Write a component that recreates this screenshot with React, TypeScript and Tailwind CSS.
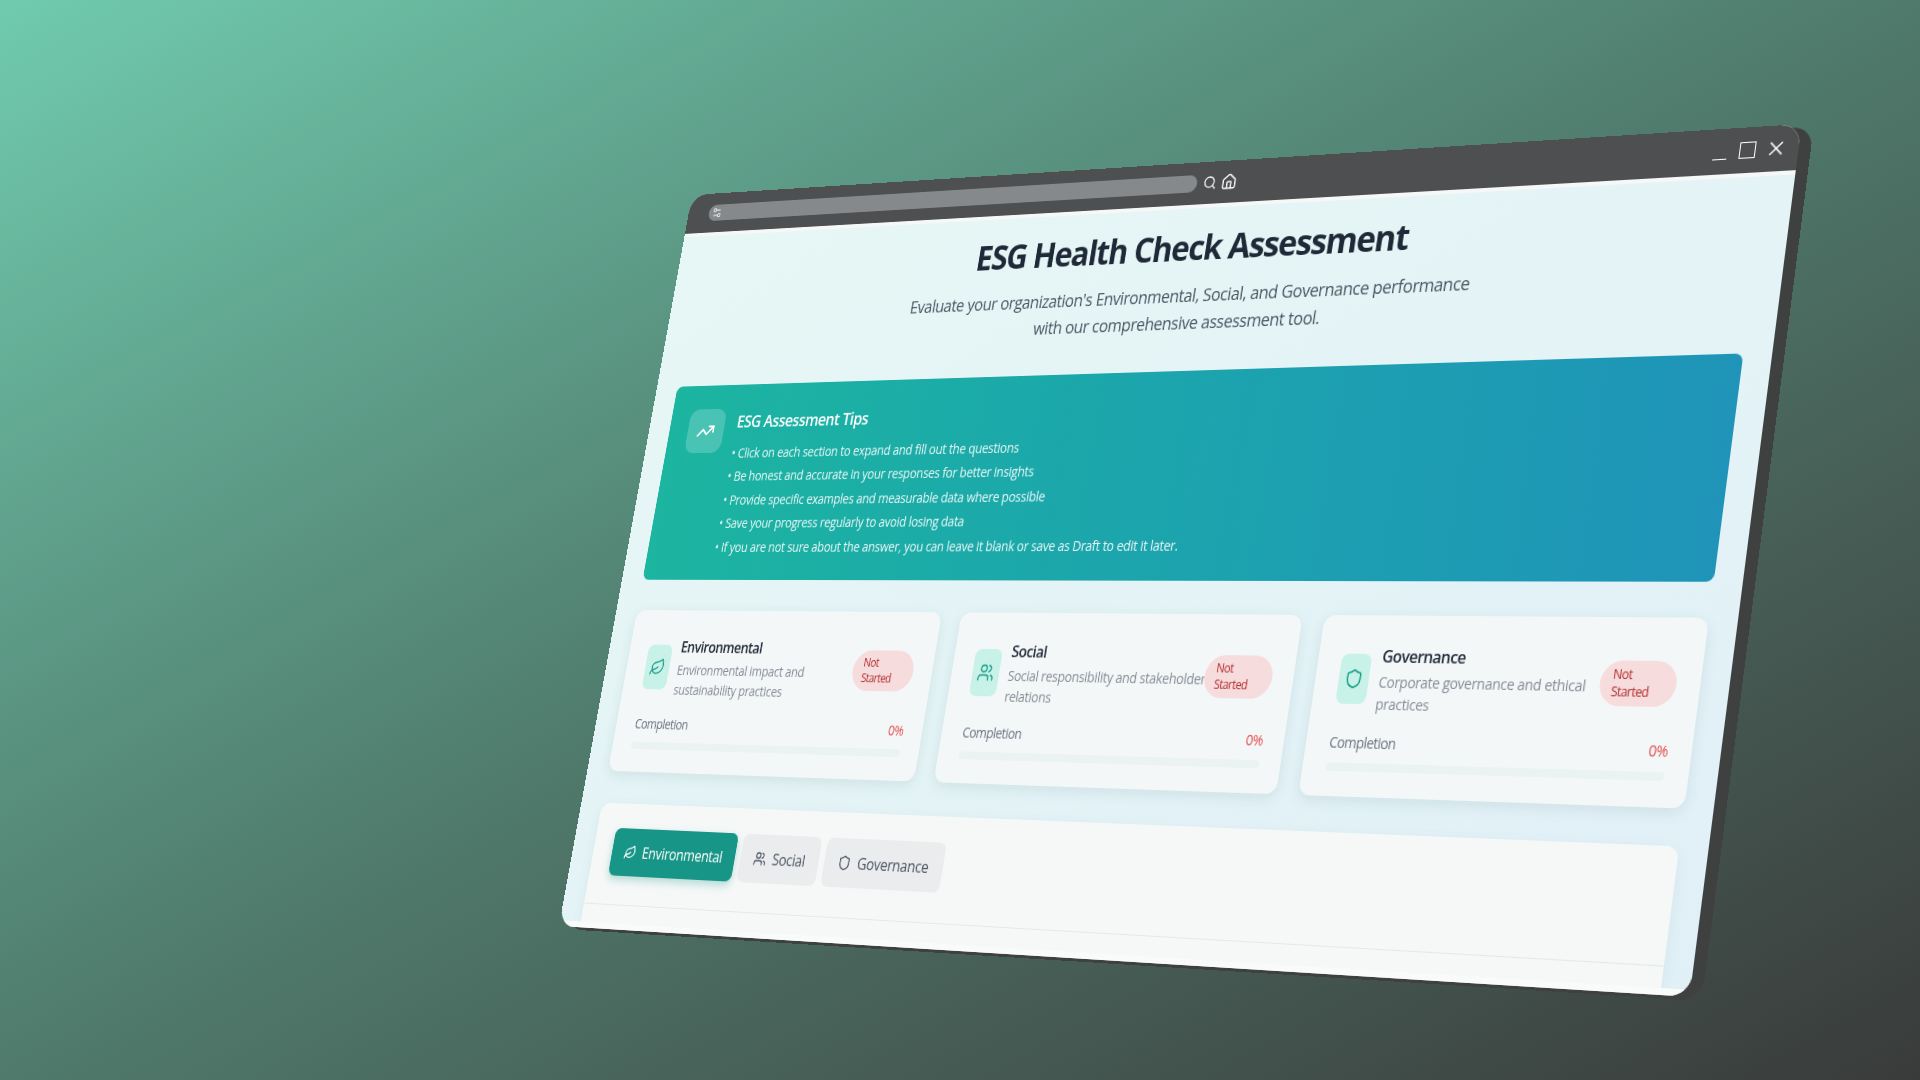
import { House, Leaf, Search, Settings2, Shield, TrendingUp, Users, X } from "lucide-react";

const W = 1280;
const H = 800;

// corners of the window face on screen: TL, TR, BR, BL
const QUAD = [
  [692, 195],
  [1802, 124],
  [1690, 997],
  [559, 926],
];

function quadMatrix() {
  const [[x0, y0], [x1, y1], [x2, y2], [x3, y3]] = QUAD;
  const dx1 = x1 - x2;
  const dy1 = y1 - y2;
  const dx2 = x3 - x2;
  const dy2 = y3 - y2;
  const sx = x0 - x1 + x2 - x3;
  const sy = y0 - y1 + y2 - y3;
  const det = dx1 * dy2 - dx2 * dy1;
  const g = (sx * dy2 - dx2 * sy) / det;
  const h = (dx1 * sy - sx * dy1) / det;
  const a = x1 - x0 + g * x1;
  const b = x3 - x0 + h * x3;
  const d = y1 - y0 + g * y1;
  const e = y3 - y0 + h * y3;
  return `matrix3d(${a / W},${d / W},0,${g / W},${b / H},${e / H},0,${h / H},0,0,1,0,${x0},${y0},0,1)`;
}

const tips = [
  "Click on each section to expand and fill out the questions",
  "Be honest and accurate in your responses for better insights",
  "Provide specific examples and measurable data where possible",
  "Save your progress regularly to avoid losing data",
  "If you are not sure about the answer, you can leave it blank or save as Draft to edit it later.",
];

const sections = [
  { name: "Environmental", icon: Leaf, lines: ["Environmental impact and", "sustainability practices"] },
  { name: "Social", icon: Users, lines: ["Social responsibility and stakeholder", "relations"] },
  { name: "Governance", icon: Shield, lines: ["Corporate governance and ethical", "practices"] },
];

const SectionCard = ({ name, icon: Icon, lines }: (typeof sections)[number]) => (
  <div className="rounded-xl bg-[#f4f7f8] pb-6 pl-[25px] pr-[23px] pt-[27px] shadow-[0_4px_14px_rgba(60,110,110,0.12)]">
    <div className="flex items-center gap-[11px]">
      <div className="flex h-12 w-8 shrink-0 items-center justify-center rounded-lg bg-[#c8f2e8]">
        <Icon size={20} strokeWidth={1.75} className="text-[#0f9a85]" />
      </div>
      <div className="min-w-0 flex-1 whitespace-nowrap">
        <div className="text-base font-semibold leading-6 text-[#1f2937]">{name}</div>
        <p className="mt-0.5 text-sm leading-[21px] tracking-[-0.02em] text-[#858b96]">
          {lines[0]}
          <br />
          {lines[1]}
        </p>
      </div>
      <div className="w-[75px] shrink-0 rounded-[21px] bg-[#f6dcdc] px-3 py-[5px] text-xs font-medium leading-4 text-[#b42a2f]">
        Not Started
      </div>
    </div>
    <div className="mt-[17px] flex items-center justify-between text-sm leading-5">
      <span className="text-[#6b7280]">Completion</span>
      <span className="font-medium text-[#e14a4a]">0%</span>
    </div>
    <div className="mt-[9px] h-2 rounded-full bg-[#eaf3f2]" />
  </div>
);

export default function App() {
  return (
    <div className="h-screen w-full overflow-hidden bg-linear-to-br from-[#70cbae] via-[#4f7a6c] to-[#393b3a] font-['Open_Sans',sans-serif] tracking-[-0.035em]">
      <div
        className="flex h-[800px] w-[1280px] origin-top-left flex-col overflow-hidden rounded-[20px] bg-[#f7f8f8] shadow-[12px_3px_0_#3f4140]"
        style={{ transform: quadMatrix() }}
      >
        <div className="flex h-11 shrink-0 items-center bg-[#4e4f51] pl-7 pr-[14px] text-white">
          <div className="flex h-[18px] w-[614px] items-center rounded-full bg-[#85898b] pl-1">
            <Settings2 size={14} className="text-[#e5e7eb]" />
          </div>
          <Search size={16} className="ml-[7px]" />
          <House size={18} className="ml-[5px]" />
          <div className="ml-auto flex items-center gap-[9px]">
            <div className="flex h-[18px] w-[18px] items-end justify-center pb-px">
              <div className="h-[1.5px] w-[14px] bg-white" />
            </div>
            <div className="mx-px h-4 w-4 border-[1.5px] border-white" />
            <X size={22} strokeWidth={1.5} absoluteStrokeWidth className="-ml-px -mr-[3px]" />
          </div>
        </div>
        <div className="h-1 shrink-0 bg-[#f6f7f7]" />

        <main className="flex min-h-0 flex-1 flex-col bg-linear-to-br from-[#e7f7f5] to-[#e1f0f7] px-7 pt-[21px]">
          <h1 className="text-center text-4xl font-bold leading-10 tracking-[-0.038em] text-[#1f2937]">
            ESG Health Check Assessment
          </h1>
          <p className="mx-auto mt-[15px] max-w-2xl text-center text-lg leading-7 tracking-[-0.025em] text-[#4b5563]">
            Evaluate your organization's Environmental, Social, and Governance performance
            <br />
            with our comprehensive assessment tool.
          </p>

          <section className="mt-9 flex h-[212px] shrink-0 gap-4 rounded-lg bg-linear-to-r from-[#1cb5a0] to-[#1f94b8] pl-[25px] pt-[26px] text-white">
            <div className="flex h-12 w-12 shrink-0 items-center justify-center rounded-xl bg-white/20">
              <TrendingUp size={24} strokeWidth={2} />
            </div>
            <div>
              <h2 className="text-lg font-semibold leading-7">ESG Assessment Tips</h2>
              <ul className="mt-2 text-sm leading-[25.4px] tracking-[-0.019em] text-white/90">
                {tips.map((tip) => (
                  <li key={tip}>• {tip}</li>
                ))}
              </ul>
            </div>
          </section>

          <div className="mt-[33px] grid shrink-0 grid-cols-3 gap-6">
            {sections.map((s) => (
              <SectionCard key={s.name} {...s} />
            ))}
          </div>

          <section className="mt-[34px] min-h-0 flex-1 rounded-t-xl bg-[#f6f8f8] shadow-[0_4px_14px_rgba(60,110,110,0.08)]">
            <div className="flex gap-[7px] border-b border-[#e5e8e9] pb-[30px] pl-[25px] pt-[26px]">
              {sections.map(({ name, icon: Icon }, i) => (
                <button
                  key={name}
                  className={
                    i === 0
                      ? "flex h-[50px] items-center gap-2 rounded-lg bg-[#179586] px-4 text-base font-medium tracking-[-0.02em] text-white shadow-[0_4px_10px_rgba(23,149,134,0.3)]"
                      : "flex h-[50px] items-center gap-2 rounded-lg bg-[#eaecee] px-[17px] text-base font-medium tracking-[-0.02em] text-[#4b5563]"
                  }
                >
                  <Icon size={16} />
                  {name}
                </button>
              ))}
            </div>
          </section>
        </main>
        <div className="h-1.5 shrink-0 bg-[#f9fafa]" />
      </div>
    </div>
  );
}
